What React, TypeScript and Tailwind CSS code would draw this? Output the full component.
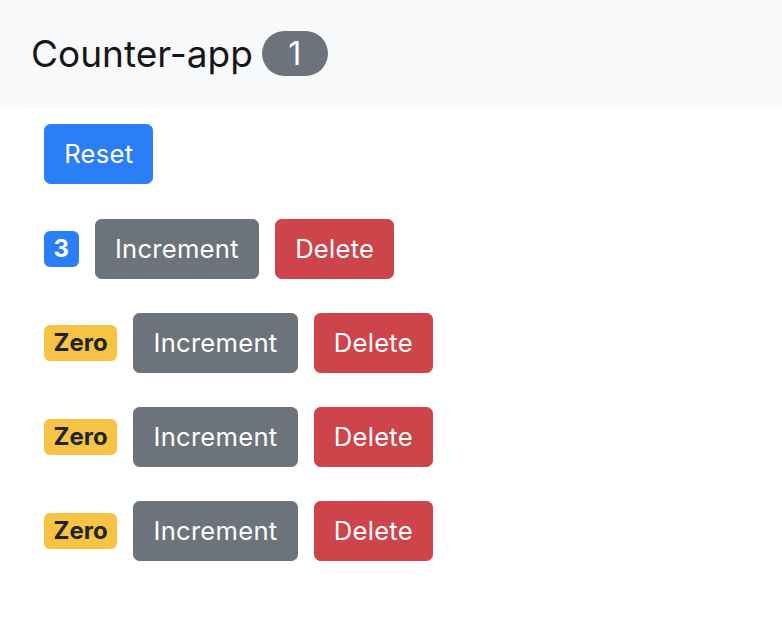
import { useState } from "react";

const font = { fontFamily: "Inter, 'Noto Sans', sans-serif" };

export default function App() {
  const [counters, setCounters] = useState([
    { id: 1, value: 3 },
    { id: 2, value: 0 },
    { id: 3, value: 0 },
    { id: 4, value: 0 },
  ]);

  const nonZero = counters.filter((c) => c.value > 0).length;

  const increment = (id: number) =>
    setCounters(counters.map((c) => (c.id === id ? { ...c, value: c.value + 1 } : c)));
  const remove = (id: number) => setCounters(counters.filter((c) => c.id !== id));
  const reset = () => setCounters(counters.map((c) => ({ ...c, value: 0 })));

  const btn =
    "text-[25.6px] leading-[1.5] tracking-[0.01em] px-[19.2px] py-[10px] border-[1.6px] rounded-[6.4px] text-white";

  return (
    <div className="min-h-screen bg-white text-[#212529]" style={font}>
      <nav className="h-[107px] bg-[#f8f9fa] flex items-center px-[31px]">
        <span className="text-[37px] leading-none text-[#161616]">Counter-app</span>
        <span className="ml-[9px] inline-flex items-center justify-center h-[45px] w-[66px] rounded-full bg-[#6c737b] text-white text-[32px] leading-none">
          {nonZero}
        </span>
      </nav>

      <main className="pl-[44px] pt-[17px] flex flex-col">
        <div className="h-[94px]">
          <button onClick={reset} className={`${btn} bg-[#2b7ff6] border-[#2b7ff6]`}>
            Reset
          </button>
        </div>

        {counters.map((c) => (
          <div key={c.id} className="h-[94px] flex items-start">
            <div className="h-[62px] flex items-center gap-[16px]">
              <span
                className={
                  "inline-flex items-center h-[36px] px-[9.6px] rounded-[6px] text-[24px] font-bold leading-none " +
                  (c.value === 0 ? "bg-[#f7c344] text-[#212529]" : "bg-[#2b7ff6] text-white")
                }
              >
                {c.value === 0 ? "Zero" : c.value}
              </span>
              <button
                onClick={() => increment(c.id)}
                className={`${btn} bg-[#6c737b] border-[#6c737b]`}
              >
                Increment
              </button>
              <button
                onClick={() => remove(c.id)}
                className={`${btn} bg-[#cd444b] border-[#cd444b]`}
              >
                Delete
              </button>
            </div>
          </div>
        ))}
      </main>
    </div>
  );
}
